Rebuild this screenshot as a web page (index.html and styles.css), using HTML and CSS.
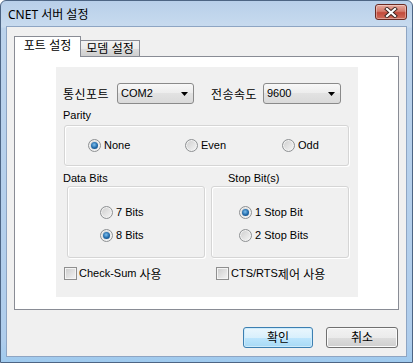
FILE: index.html
```html
<!DOCTYPE html>
<html lang="ko">
<head>
    <meta charset="UTF-8">
    <title>CNET 서버 설정</title>
    <link rel="stylesheet" href="styles.css">
</head>
<body>
    <div class="window">
        <div class="titlebar">
            <span class="title">CNET 서버 설정</span>
            <div class="close">
                <svg width="14" height="11" viewBox="0 0 14 11">
                    <path d="M3 2 L11 9 M11 2 L3 9" stroke="#3a2420" stroke-width="4" stroke-linecap="square"/>
                    <path d="M3 2 L11 9 M11 2 L3 9" stroke="#fff" stroke-width="2.2" stroke-linecap="square"/>
                </svg>
            </div>
        </div>
        <div class="client">
            <div class="tabs">
                <div class="tab active">포트 설정</div>
                <div class="tab">모뎀 설정</div>
            </div>
            <div class="panel">
                <div class="form">
                    <div class="combo-row">
                        <span class="ko first-label">통신포트</span>
                        <div class="combo first">
                            <span>COM2</span>
                            <svg width="7" height="4" viewBox="0 0 7 4"><path d="M0 0 H7 L3.5 4 Z" fill="#000"/></svg>
                        </div>
                        <span class="ko second-label">전송속도</span>
                        <div class="combo">
                            <span>9600</span>
                            <svg width="7" height="4" viewBox="0 0 7 4"><path d="M0 0 H7 L3.5 4 Z" fill="#000"/></svg>
                        </div>
                    </div>

                    <div class="label parity-label">Parity</div>
                    <div class="group parity">
                        <label class="radio wide"><span class="dot on"></span>None</label>
                        <label class="radio wide"><span class="dot"></span>Even</label>
                        <label class="radio"><span class="dot"></span>Odd</label>
                    </div>

                    <div class="bits-labels">
                        <span class="data-label">Data Bits</span>
                        <span>Stop Bit(s)</span>
                    </div>
                    <div class="bits">
                        <div class="group bit-group data">
                            <label class="radio"><span class="dot"></span>7 Bits</label>
                            <label class="radio"><span class="dot on"></span>8 Bits</label>
                        </div>
                        <div class="group bit-group stop">
                            <label class="radio"><span class="dot on"></span>1 Stop Bit</label>
                            <label class="radio"><span class="dot"></span>2 Stop Bits</label>
                        </div>
                    </div>

                    <div class="checks">
                        <label class="check first-check"><span class="box"></span>Check-Sum <span class="ko">사용</span></label>
                        <label class="check"><span class="box"></span>CTS/RTS<span class="ko">제어 사용</span></label>
                    </div>
                </div>
            </div>
            <div class="buttons">
                <div class="btn default ko">확인</div>
                <div class="btn cancel ko">취소</div>
            </div>
        </div>
    </div>
</body>
</html>
```

FILE: styles.css
```css
* {
    box-sizing: border-box;
}

body {
    margin: 0;
    font-family: "Liberation Sans", "Noto Sans CJK KR", sans-serif;
    font-size: 11px;
    color: #000;
}

.ko {
    font-family: "Noto Sans CJK KR", sans-serif;
    font-size: 12px;
}

.window {
    width: 413px;
    height: 363px;
    border: 1px solid #4d6584;
    border-radius: 6px 6px 0 0;
    background: linear-gradient(#b8cfe9, #c8dbef 26px, #bcd3ec 27px, #afcdec 340px, #9fcaee);
    padding: 0 5px 5px;
    display: flex;
    flex-direction: column;
}

.titlebar {
    height: 25px;
    display: flex;
    align-items: flex-start;
}

.title {
    margin-top: 6px;
    padding-left: 2px;
    font-family: "Noto Sans", "Noto Sans CJK KR", sans-serif;
    font-size: 12px;
    line-height: 16px;
}

.close {
    margin-left: auto;
    margin-top: 3px;
    width: 32px;
    height: 16px;
    border: 1px solid #6b2a22;
    border-radius: 3px;
    background: linear-gradient(#e6a89d, #d47b6c 45%, #c24a3b 55%, #cf6d5c);
    box-shadow: inset 0 0 0 1px rgba(255, 255, 255, 0.35);
    display: flex;
    align-items: center;
    justify-content: center;
}

.client {
    flex: 1;
    border: 1px solid #8ea5c3;
    background: #f0f0f0;
    padding: 9px 7px 0;
    display: flex;
    flex-direction: column;
}

/* tabs */
.tabs {
    display: flex;
    align-items: flex-end;
    height: 20px;
    position: relative;
    z-index: 1;
}

.tab {
    font-family: "Noto Sans CJK KR", sans-serif;
    font-size: 12px;
    text-align: center;
    border: 1px solid #898c95;
    border-bottom: none;
}

.tab.active {
    width: 67px;
    height: 21px;
    margin-bottom: -1px;
    line-height: 16px;
    background: #fff;
}

.tab:not(.active) {
    width: 59px;
    height: 16px;
    line-height: 13px;
    border-left: none;
    background: linear-gradient(#f3f3f3, #ebebeb 50%, #dddddd 50%, #cfcfcf);
}

.panel {
    width: 385px;
    height: 254px;
    border: 1px solid #898c95;
    background: #fff;
}

.form {
    margin: 10px 0 0 41px;
    width: 302px;
    height: 230px;
    background: #f0f0f0;
    display: flex;
    flex-direction: column;
}

/* combos */
.combo-row {
    margin-top: 16px;
    height: 21px;
    padding-left: 7px;
    display: flex;
    align-items: center;
}

.first-label {
    width: 54px;
    letter-spacing: 0.5px;
}

.second-label {
    margin-left: 17px;
    width: 52px;
    letter-spacing: 0.5px;
}

.combo {
    width: 77px;
    height: 21px;
    border: 1px solid #8a8a8a;
    border-radius: 3px;
    background: linear-gradient(#f8f8f8, #ececec 50%, #e2e2e2 50%, #dadada);
    padding: 0 5px 0 2px;
    display: flex;
    align-items: center;
    justify-content: space-between;
}

.combo span {
    padding: 0 1px;
    line-height: 15px;
}

.combo:not(.first) {
    width: 78px;
}

.label {
    line-height: 13px;
    height: 13px;
    padding-left: 7px;
}

.parity-label {
    margin-top: 5px;
}

/* group boxes */
.group {
    border: 1px solid #d5d5d5;
    border-radius: 3px;
    box-shadow: inset 1px 1px 0 #fff, 1px 1px 0 #fff;
}

.parity {
    margin: 3px 0 0 8px;
    width: 285px;
    height: 41px;
    padding-left: 23px;
    display: flex;
    align-items: center;
}

.radio {
    display: flex;
    align-items: center;
    height: 13px;
    line-height: 13px;
}

.radio.wide {
    width: 97px;
}

.dot {
    width: 13px;
    height: 13px;
    margin-right: 3px;
    border-radius: 50%;
    border: 1px solid #8e9193;
    background: linear-gradient(135deg, #cdcdcd, #f6f6f6);
    box-shadow: inset 0 0 0 1px #f2f2f2;
    display: flex;
    align-items: center;
    justify-content: center;
}

.dot.on::after {
    content: "";
    width: 7px;
    height: 7px;
    border-radius: 50%;
    background: radial-gradient(circle at 45% 40%, #7fc0ee, #1f68a8 55%, #133f6e);
}

.bits-labels {
    margin-top: 6px;
    height: 13px;
    line-height: 13px;
    padding-left: 7px;
    display: flex;
}

.data-label {
    width: 165px;
}

.bits {
    margin-top: 1px;
    padding-left: 11px;
    display: flex;
    gap: 6px;
}

.bit-group {
    width: 138px;
    height: 72px;
    padding-top: 19px;
    display: flex;
    flex-direction: column;
    gap: 10px;
}

.bit-group.data {
    padding-left: 32px;
}

.bit-group.stop {
    padding-left: 27px;
}

/* checkboxes */
.checks {
    margin-top: 9px;
    padding-left: 8px;
    display: flex;
}

.check {
    display: flex;
    align-items: center;
    height: 13px;
    line-height: 13px;
    white-space: pre;
}

.first-check {
    width: 152px;
}

.box {
    width: 13px;
    height: 13px;
    margin-right: 2px;
    border: 1px solid #8f8f8f;
    background: linear-gradient(135deg, #cbcbcb, #f5f5f5);
    box-shadow: inset 0 0 0 1px #f4f4f4;
}

/* buttons */
.buttons {
    margin-top: 17px;
    padding-right: 1px;
    display: flex;
    justify-content: flex-end;
    gap: 13px;
}

.btn {
    height: 21px;
    border-radius: 3px;
    text-align: center;
    line-height: 18px;
}

.btn.default {
    width: 70px;
    border: 1px solid #3c7fb1;
    background: linear-gradient(#eaf6fd, #d9f0fc 50%, #bee6fd 50%, #a7d9f5);
    box-shadow: inset 0 0 0 1px #cdebfb;
}

.btn.cancel {
    width: 72px;
    border: 1px solid #707070;
    background: linear-gradient(#f2f2f2, #ebebeb 50%, #dddddd 50%, #cfcfcf);
    box-shadow: inset 0 0 0 1px #fbfbfb;
}
```
